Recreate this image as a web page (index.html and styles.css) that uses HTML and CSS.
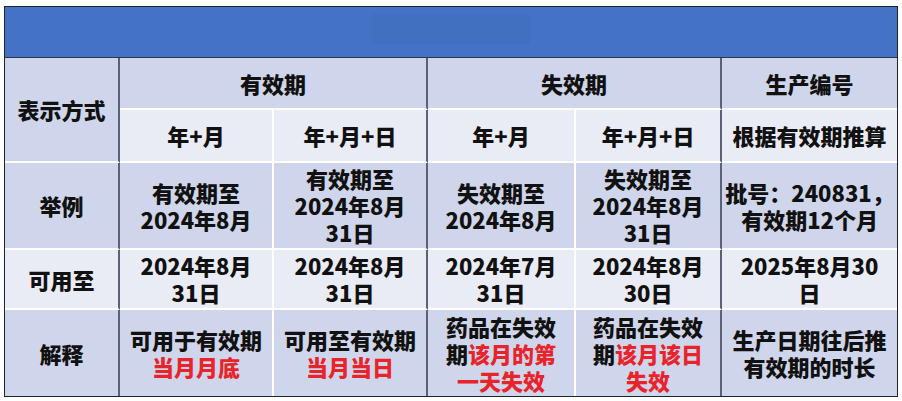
FILE: index.html
```html
<!DOCTYPE html>
<html lang="zh-CN">
<head>
<meta charset="utf-8">
<title>有效期与失效期</title>
<link rel="stylesheet" href="styles.css">
</head>
<body>
<div class="sheet">
  <div class="banner"><div class="banner-mark"></div></div>
  <table class="grid">
    <colgroup>
      <col class="c1"><col class="c2"><col class="c3"><col class="c4"><col class="c5"><col class="c6">
    </colgroup>
    <tr class="r-h1">
      <td rowspan="2" class="dark sep">表示方式</td>
      <td colspan="2" class="dark sep">有效期</td>
      <td colspan="2" class="dark sep">失效期</td>
      <td class="dark last">生产编号</td>
    </tr>
    <tr class="r-h2">
      <td class="light">年+月</td>
      <td class="light sep">年+月+日</td>
      <td class="light">年+月</td>
      <td class="light sep">年+月+日</td>
      <td class="light last">根据有效期推算</td>
    </tr>
    <tr class="r-ex">
      <td class="dark sep">举例</td>
      <td class="dark">有效期至<br>2024年8月</td>
      <td class="dark sep">有效期至<br>2024年8月<br>31日</td>
      <td class="dark">失效期至<br>2024年8月</td>
      <td class="dark sep">失效期至<br>2024年8月<br>31日</td>
      <td class="dark last">批号：240831，<br>有效期12个月</td>
    </tr>
    <tr class="r-use">
      <td class="light sep">可用至</td>
      <td class="light">2024年8月<br>31日</td>
      <td class="light sep">2024年8月<br>31日</td>
      <td class="light">2024年7月<br>31日</td>
      <td class="light sep">2024年8月<br>30日</td>
      <td class="light last">2025年8月30<br>日</td>
    </tr>
    <tr class="r-exp">
      <td class="dark sep bottom">解释</td>
      <td class="dark bottom">可用于有效期<br><span class="red">当月月底</span></td>
      <td class="dark sep bottom">可用至有效期<br><span class="red">当月当日</span></td>
      <td class="dark bottom">药品在失效<br>期<span class="red">该月的第<br>一天失效</span></td>
      <td class="dark sep bottom">药品在失效<br>期<span class="red">该月该日<br>失效</span></td>
      <td class="dark last bottom">生产日期往后推<br>有效期的时长</td>
    </tr>
  </table>
</div>
</body>
</html>
```

FILE: styles.css
```css
html, body {
  margin: 0;
  padding: 0;
  background: #ffffff;
}

body {
  font-family: "Noto Sans CJK SC", "Noto Sans", sans-serif;
}

.sheet {
  margin: 6px 0 0 4px;
  width: 892px;
  border: 1px solid #1f2330;
}

.banner {
  height: 50px;
  background: #4472c4;
  border-bottom: 1px solid #2a3350;
  display: flex;
  justify-content: center;
  align-items: center;
}

.banner-mark {
  width: 158px;
  height: 30px;
  margin-top: -6px;
  background: rgba(40, 70, 140, 0.05);
}

.grid {
  width: 892px;
  table-layout: fixed;
  border-collapse: separate;
  border-spacing: 0;
}

.c1 { width: 115px; }
.c2 { width: 154px; }
.c3 { width: 154px; }
.c4 { width: 148px; }
.c5 { width: 146px; }
.c6 { width: 175px; }

.grid td {
  padding: 0;
  text-align: center;
  vertical-align: middle;
  font-size: 22px;
  font-weight: 900;
  line-height: 27px;
  color: #111111;
  border-right: 2px solid #ffffff;
  border-bottom: 2px solid #ffffff;
  white-space: nowrap;
}

.grid td.sep { border-right: 2px solid #5b6277; }
.grid td.last { border-right: 0; }
.grid td.bottom { border-bottom: 0; }

.dark { background: #cfd5ea; }
.light { background: #e9ebf5; }

.red { color: #e8232a; }

.r-h1 { height: 52px; }
.r-h2 { height: 53px; }
.r-ex { height: 87px; }
.r-use { height: 60px; }
.r-exp { height: 86px; }
```
